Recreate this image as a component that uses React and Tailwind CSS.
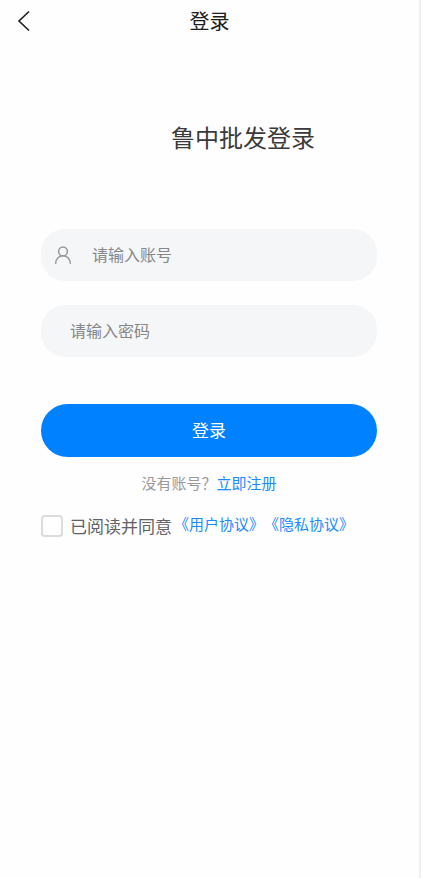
import { useState } from 'react';

const LINK_CLASS = 'text-[#1a8cff]';

function BackIcon() {
  return (
    <svg width="14" height="22" viewBox="0 0 14 22" fill="none" stroke="#1c1c1c" strokeWidth="1.6" aria-hidden="true">
      <path d="M12 1.5 2 11l10 9.5" />
    </svg>
  );
}

function UserIcon() {
  return (
    <svg width="18" height="18" viewBox="0 0 18 18" fill="none" stroke="#979797" strokeWidth="1.5" aria-hidden="true">
      <circle cx="9" cy="5.4" r="4.4" />
      <path d="M1.7 17.2C1.7 13 4.8 9.8 9 9.8s7.3 3.2 7.3 7.4" strokeLinecap="round" />
    </svg>
  );
}

export default function App() {
  const [account, setAccount] = useState('');
  const [password, setPassword] = useState('');
  const [agreed, setAgreed] = useState(false);

  return (
    <div className="min-h-screen border-r-2 border-[#efefef] bg-[#fefefe] font-['Noto_Sans_CJK_SC',sans-serif]">
      <header className="grid h-[42px] grid-cols-[1fr_auto_1fr] items-center px-[17px]">
        <button type="button" aria-label="返回" className="justify-self-start">
          <BackIcon />
        </button>
        <h1 className="text-[20px] leading-7 text-[#1c1c1c]">登录</h1>
      </header>

      <main className="pt-[77px] pr-[42px] pl-[41px]">
        <h2 className="pl-[68px] text-center text-2xl leading-9 text-[#3a3a3a]">鲁中批发登录</h2>

        <form className="mt-[74px]" onSubmit={(event) => event.preventDefault()}>
          <div className="flex h-[52px] items-center rounded-3xl bg-[#f4f6f8] pr-5 pl-[13px]">
            <UserIcon />
            <input
              type="text"
              aria-label="账号"
              placeholder="请输入账号"
              value={account}
              onChange={(event) => setAccount(event.target.value)}
              className="ml-5 min-w-0 flex-1 bg-transparent pb-0.5 text-base text-[#333] outline-none placeholder:text-[#868686]"
            />
          </div>

          <div className="mt-6 flex h-[52px] items-center rounded-3xl bg-[#f4f6f8] px-[29px]">
            <input
              type="password"
              aria-label="密码"
              placeholder="请输入密码"
              value={password}
              onChange={(event) => setPassword(event.target.value)}
              className="min-w-0 flex-1 bg-transparent pb-0.5 text-base text-[#333] outline-none placeholder:text-[#868686]"
            />
          </div>

          <button type="submit" className="mt-[47px] h-[53px] w-full rounded-full bg-[#0081ff] pb-0.5 text-[17px] text-white">
            登录
          </button>

          <p className="mt-4 text-center text-[15px] leading-5 text-[#999]">
            没有账号？
            <a href="#register" className={LINK_CLASS}>立即注册</a>
          </p>

          <div className="mt-[21px] flex items-center">
            <input
              id="agree"
              type="checkbox"
              checked={agreed}
              onChange={(event) => setAgreed(event.target.checked)}
              className="size-[22px] shrink-0 appearance-none rounded-[4px] border-2 border-[#dcdcde] bg-white checked:border-[#0081ff] checked:bg-[#0081ff]"
            />
            <label htmlFor="agree" className="ml-[7px] text-[17px] leading-6 whitespace-nowrap text-[#606266]">
              已阅读并同意
            </label>
            <div className="ml-0.5 flex pb-1 text-[15px] leading-5 whitespace-nowrap">
              <a href="#terms" className={LINK_CLASS}>《用户协议》</a>
              <a href="#privacy" className={LINK_CLASS}>《隐私协议》</a>
            </div>
          </div>
        </form>
      </main>
    </div>
  );
}
